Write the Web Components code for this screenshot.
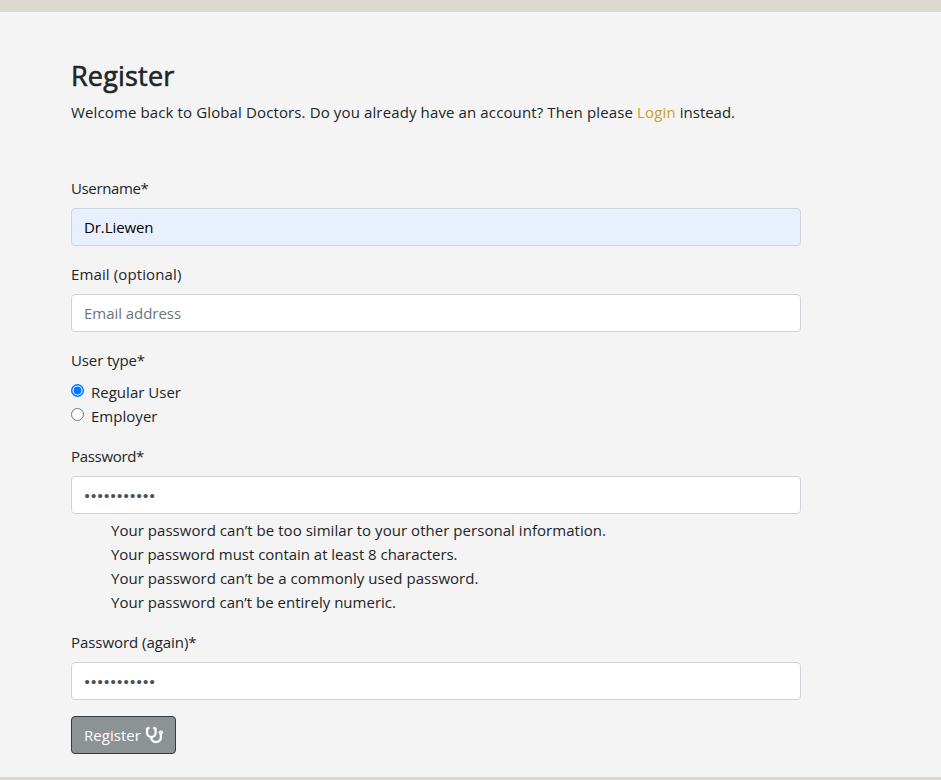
<!DOCTYPE html>
<html lang="en">
<head>
<meta charset="utf-8">
<title>Register</title>
<style>
html, body { margin: 0; height: 780px; overflow: hidden; }
body { background: #dcd8d2; color: #212529; font: 15px/24px "Open Sans", "Noto Sans", sans-serif; }
</style>
</head>
<body>
<register-page></register-page>
<script>
const define = (name, html, setup) => {
  const tpl = document.createElement('template');
  tpl.innerHTML = html;
  customElements.define(name, class extends HTMLElement {
    connectedCallback() {
      if (this.shadowRoot) return;
      const root = this.attachShadow({ mode: 'open' });
      root.append(tpl.content.cloneNode(true));
      if (setup) setup(this, root);
    }
  });
};

// A run of text tracked to a given width
define('fit-text', `<style>:host{display:inline-block;white-space:pre}</style><slot></slot>`, (el) => {
  const target = parseFloat(el.getAttribute('width'));
  const natural = el.getBoundingClientRect().width;
  if (target && natural) el.style.letterSpacing = (target - natural) / el.textContent.length + 'px';
});

define('form-field', `<style>
:host{display:block;margin-bottom:16px}
.label{height:24px;margin-bottom:8px}
</style><div class="label"><slot name="label"></slot></div><slot></slot>`);

define('text-box', `<style>
:host{display:flex;align-items:center;box-sizing:border-box;height:38px;padding:0 12px;border:1px solid #ced4da;border-radius:4px;background:#fff;color:#495057}
:host([kind=filled]){background:#e8f0fe;color:#000}
:host([kind=empty]){color:#6c757d}
:host([kind=secret]){font-family:"Liberation Sans",sans-serif;font-size:15px;padding:2px 12px 0 12.5px}
</style><slot></slot>`);

define('radio-option', `<style>
:host{display:flex;height:24px;gap:7px}
svg{width:13px;height:13px;margin-top:4px}
.on,:host([checked]) .off{display:none}
:host([checked]) .on{display:block}
</style><svg viewBox="0 0 13 13"><circle class="off" cx="6.5" cy="6.5" r="6" fill="#fff" stroke="#767676"/><g class="on"><circle cx="6.5" cy="6.5" r="5.75" fill="#fff" stroke="#0075ff" stroke-width="1.5"/><circle cx="6.5" cy="6.5" r="3.9" fill="#0075ff"/></g></svg><slot></slot>`);

define('submit-button', `<style>
:host{display:flex;align-items:center;box-sizing:border-box;width:105px;height:38px;padding:0 12px;justify-content:space-between;border:1px solid #343a40;border-radius:4px;background:#8d9292;color:#fff}
svg{width:17px;height:16px;display:block;overflow:visible}
</style><slot></slot><svg viewBox="0 0 512 512" preserveAspectRatio="none" fill="currentColor" stroke="currentColor" stroke-width="5"><path d="M447.1 112c-34.2.5-62.3 28.4-63 62.6-.5 24.3 12.5 45.6 32 56.8V344c0 57.3-50.2 104-112 104-60 0-109.2-44.1-111.9-99.2C265 333.8 320 269.2 320 192V36.6c0-11.4-8.1-21.3-19.3-23.5L237.8.5c-13-2.6-25.6 5.8-28.2 18.8L206.4 35c-2.6 13 5.8 25.6 18.8 28.2l30.7 6.1v121.4c0 52.9-42.2 96.7-95.1 97.2-53.4.5-96.9-42.7-96.9-96V69.4l30.7-6.1c13-2.6 21.4-15.2 18.8-28.2l-3.1-15.7C107.7 6.4 95.1-2 82.1.6L19.3 13C8.1 15.3 0 25.1 0 36.6V192c0 77.3 55.1 142 128.1 156.8C130.7 439.2 208.6 512 304 512c97 0 176-75.4 176-168V231.4c19.1-11.1 32-31.7 32-55.4 0-35.7-29.2-64.5-64.9-64zm.9 80c-8.8 0-16-7.2-16-16s7.2-16 16-16 16 7.2 16 16-7.2 16-16 16z"/></svg>`);

define('register-page', `<style>
:host{display:block;padding-top:12px;background:#dcd8d2}
main{box-sizing:border-box;height:765px;padding:47px 140px 0 71px;background:#f4f4f4}
h2{margin:0 0 8px;height:33px;font-size:27px;line-height:34px;font-weight:400;-webkit-text-stroke:.6px currentColor}
p{margin:0 0 52px;height:24px;white-space:nowrap;display:flex}
a{color:#c9a21c}
ul{list-style:none;margin:4px 0 0;padding:0 0 0 40px}
li{height:24px}
</style>
<main>
<h2><fit-text width="103.5">Register</fit-text></h2>
<p><fit-text width="566">Welcome back to Global Doctors. Do you already have an account? Then please </fit-text><a><fit-text width="39">Login</fit-text></a><fit-text width="59"> instead.</fit-text></p>
<form-field><fit-text slot="label" width="77.5">Username*</fit-text><text-box kind="filled"><fit-text width="69.5">Dr.Liewen</fit-text></text-box></form-field>
<form-field><fit-text slot="label" width="110.5">Email (optional)</fit-text><text-box kind="empty"><fit-text width="97">Email address</fit-text></text-box></form-field>
<form-field><fit-text slot="label" width="74">User type*</fit-text>
<radio-option checked><fit-text width="90">Regular User</fit-text></radio-option>
<radio-option><fit-text width="66.5">Employer</fit-text></radio-option></form-field>
<form-field><fit-text slot="label" width="73">Password*</fit-text><text-box kind="secret"><fit-text width="71.5">•••••••••••</fit-text></text-box>
<ul>
<li><fit-text width="495">Your password can’t be too similar to your other personal information.</fit-text></li>
<li><fit-text width="346.5">Your password must contain at least 8 characters.</fit-text></li>
<li><fit-text width="367.5">Your password can’t be a commonly used password.</fit-text></li>
<li><fit-text width="285">Your password can’t be entirely numeric.</fit-text></li>
</ul></form-field>
<form-field><fit-text slot="label" width="125.5">Password (again)*</fit-text><text-box kind="secret"><fit-text width="71.5">•••••••••••</fit-text></text-box></form-field>
<submit-button><fit-text width="57">Register</fit-text></submit-button>
</main>`);
</script>
</body>
</html>
